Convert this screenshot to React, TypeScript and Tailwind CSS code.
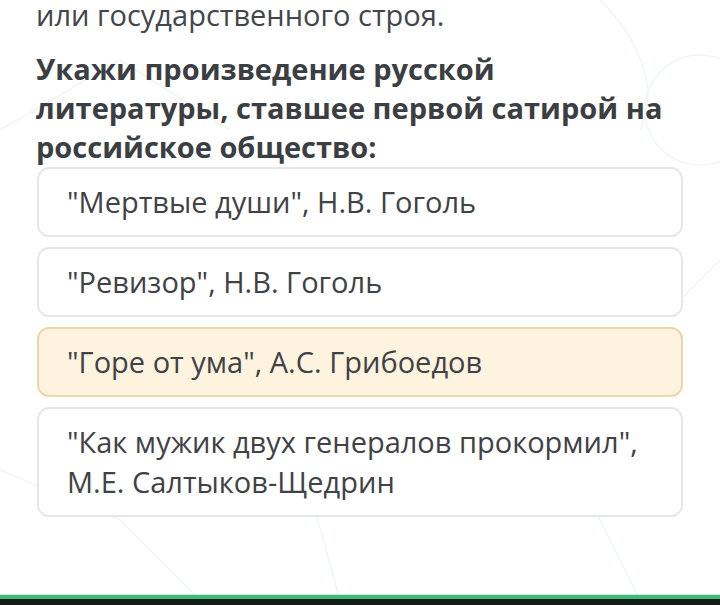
import React from "react";

const options = [
  { text: '"Мертвые души", Н.В. Гоголь', selected: false },
  { text: '"Ревизор", Н.В. Гоголь', selected: false },
  { text: '"Горе от ума", А.С. Грибоедов', selected: true },
  { text: '"Как мужик двух генералов прокормил", М.Е. Салтыков-Щедрин', selected: false },
];

export default function App() {
  return (
    <div
      className="w-[720px] h-[605px] bg-white flex flex-col overflow-hidden relative"
      style={{ fontFamily: '"Open Sans", "Noto Sans", sans-serif' }}
    >
      <svg className="absolute inset-0 pointer-events-none" width="720" height="605" viewBox="0 0 720 605" fill="none" stroke="#f0f7f2" strokeWidth="1.5">
        <path d="M0 130 L120 60 L230 130" />
        <path d="M600 0 C640 40 660 90 640 130" />
        <circle cx="700" cy="110" r="55" />
        <path d="M0 470 L120 520 L200 600" />
        <path d="M290 420 L340 600" />
        <path d="M560 440 L640 600" />
        <path d="M680 300 L720 260" />
      </svg>
      <div className="relative flex flex-col px-[37px]">
        <p className="text-[29px] leading-[34px] text-[#43464a] -mt-[2px] -ml-[1px] whitespace-nowrap">или государственного строя.</p>
        <h2 className="mt-[17px] w-[640px] -ml-[1px] text-[29px] leading-[39px] font-bold text-[#3b3e42]">
          Укажи произведение русской литературы, ставшее первой сатирой на российское общество:
        </h2>
        <div className="mt-[1px] flex flex-col gap-[10px]">
          {options.map((o) => (
            <div
              key={o.text}
              className={
                o.selected
                  ? "rounded-[12px] border-2 border-[#ead9a8] bg-[#fdf3de] min-h-[70px] flex items-center pl-[28px] pr-[24px] py-[13px]"
                  : "rounded-[12px] border-2 border-[#e6e8e8] bg-white min-h-[70px] flex items-center pl-[28px] pr-[24px] py-[13px]"
              }
            >
              <span className="text-[29px] leading-[40px] text-[#404245]">{o.text}</span>
            </div>
          ))}
        </div>
      </div>
      <div className="mt-auto relative">
        <div className="h-[1px] bg-[#c8efd8]" />
        <div className="h-[4px] bg-[#3fb87c]" />
        <div className="h-[6px] bg-[#111c16]" />
      </div>
    </div>
  );
}
